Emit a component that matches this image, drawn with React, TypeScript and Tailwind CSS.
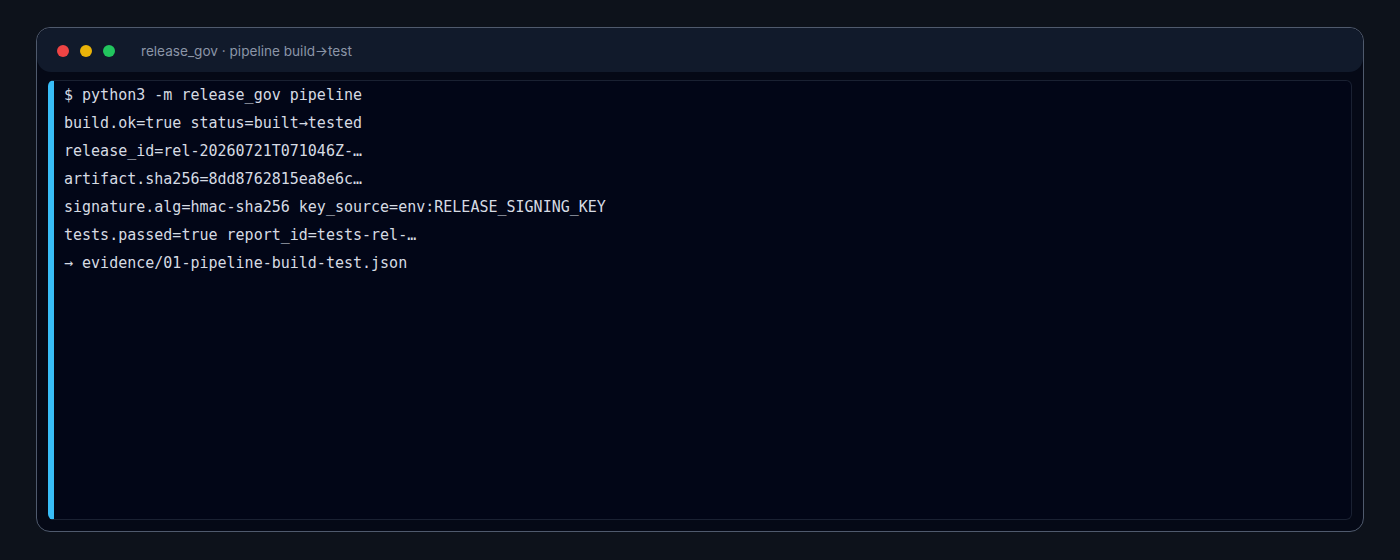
import React from 'react';

const lines = [
  '$ python3 -m release_gov pipeline',
  'build.ok=true status=built→tested',
  'release_id=rel-20260721T071046Z-…',
  'artifact.sha256=8dd8762815ea8e6c…',
  'signature.alg=hmac-sha256 key_source=env:RELEASE_SIGNING_KEY',
  'tests.passed=true report_id=tests-rel-…',
  '→ evidence/01-pipeline-build-test.json',
];

const App: React.FC = () => {
  return (
    <div className="w-[1400px] h-[560px] bg-[#0d121b] px-[36px] pt-[27px] pb-[28px]">
      <div className="h-full flex flex-col rounded-[14px] border border-[#4f5a6d] bg-[#050916] overflow-hidden">
        {/* Title bar */}
        <div className="h-[44px] shrink-0 flex items-center gap-[11px] pl-[20px] pt-[2px] rounded-[14px] bg-[#111a2b]">
          <span className="w-3 h-3 rounded-full bg-[#ef4444]" />
          <span className="w-3 h-3 rounded-full bg-[#eab308]" />
          <span className="w-3 h-3 rounded-full bg-[#22c55e]" />
          <span className="ml-[15px] text-[13.6px] text-[#8b95a7] font-['Inter',sans-serif]">
            release_gov · pipeline build→test
          </span>
        </div>

        {/* Terminal output */}
        <div className="flex-1 flex px-[11px] pt-2 pb-[11px]">
          <div className="flex-1 rounded-[6px] border border-[#1a2132] border-l-[6px] border-l-[#38bdf8] bg-[#020617] pl-[10px]">
            {lines.map((line) => (
              <div
                key={line}
                className="h-[28px] leading-[28px] text-[15px] text-[#d6dbe3] font-['DejaVu_Sans_Mono',monospace] whitespace-pre"
              >
                {line}
              </div>
            ))}
          </div>
        </div>
      </div>
    </div>
  );
};

export default App;
